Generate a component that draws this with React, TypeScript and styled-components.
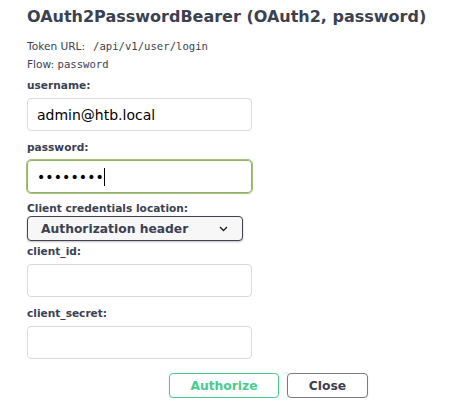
import React from "react";
import styled, { createGlobalStyle } from "styled-components";

const GlobalStyle = createGlobalStyle`
  html, body {
    margin: 0;
    padding: 0;
    background: #ffffff;
  }
  body {
    font-family: "DejaVu Sans", sans-serif;
    color: #3b4151;
  }
  * { box-sizing: border-box; }
`;

const Panel = styled.div`
  padding: 7px 0 0 27px;
  width: 474px;
`;

const Title = styled.h4`
  margin: 0 0 10px;
  font-size: 16px;
  line-height: 20px;
  font-weight: 700;
  color: #3b4151;
  white-space: nowrap;
`;

const Info = styled.p`
  margin: 0;
  font-size: 10.6px;
  line-height: 18px;
  color: #3b4151;
`;

const Code = styled.code<{ $gap?: number }>`
  font-family: "DejaVu Sans Mono", monospace;
  font-size: 10.6px;
  color: #3b4151;
  margin-left: ${(p) => p.$gap ?? 0}px;
`;

const Form = styled.div`
  display: flex;
  flex-direction: column;
  margin-top: 5px;
`;

const Label = styled.label`
  display: block;
  font-size: 10.6px;
  line-height: 14px;
  font-weight: 700;
  color: #3b4151;
`;

const TextInput = styled.input`
  display: block;
  width: 225px;
  height: 33px;
  margin: 6px 0 9px;
  padding: 0 9px;
  border: 1px solid #d9d9d9;
  border-radius: 4px;
  background: #fff;
  font-family: "DejaVu Sans", sans-serif;
  font-size: 14px;
  color: #000;
  outline: none;
`;

const FocusedField = styled.div`
  display: flex;
  align-items: center;
  width: 225px;
  height: 33px;
  margin: 6px 0 8px;
  padding: 0 9px;
  border: 1px solid #93b268;
  outline: 1px solid #a6bf80;
  border-radius: 4px;
  background: #fff;
  font-family: "DejaVu Sans", sans-serif;
  font-size: 14px;
  color: #000;
  letter-spacing: 0.1px;
`;

const Caret = styled.span`
  display: inline-block;
  width: 1px;
  height: 18px;
  background: #000;
`;

const Select = styled.div`
  display: flex;
  align-items: center;
  justify-content: space-between;
  width: 216px;
  height: 25px;
  margin: 1px 0 3px;
  padding: 0 14px 0 13px;
  border: 1px solid #41444e;
  border-radius: 4px;
  background: #f7f7f7;
  box-shadow: 0 1px 2px 0 rgba(0, 0, 0, 0.25);
  font-size: 12.3px;
  font-weight: 700;
  color: #3b4151;
`;

const Buttons = styled.div`
  display: flex;
  gap: 8px;
  padding-left: 142px;
  margin-top: 5px;
`;

const Button = styled.button<{ $variant: "authorize" | "close" }>`
  height: 25px;
  padding: 0 20px;
  border-radius: 4px;
  border: 1px solid ${(p) => (p.$variant === "authorize" ? "#49cc90" : "#7a7a7a")};
  color: ${(p) => (p.$variant === "authorize" ? "#49cc90" : "#3b4151")};
  background: transparent;
  box-shadow: 0 1px 2px rgba(0, 0, 0, 0.1);
  font-family: "DejaVu Sans", sans-serif;
  font-size: 12.3px;
  font-weight: 700;
  min-width: ${(p) => (p.$variant === "close" ? "81px" : "110px")};
  cursor: pointer;
`;

const Chevron = () => (
  <svg width="9" height="6" viewBox="0 0 9 6" aria-hidden="true">
    <polyline points="1,1 4.5,4.5 8,1" fill="none" stroke="#222" strokeWidth="1.4" />
  </svg>
);

export default function App() {
  return (
    <>
      <GlobalStyle />
      <Panel>
        <Title>OAuth2PasswordBearer (OAuth2, password)</Title>
        <Info>
          Token URL:<Code $gap={8}>/api/v1/user/login</Code>
        </Info>
        <Info>
          Flow: <Code>password</Code>
        </Info>
        <Form>
          <Label>username:</Label>
          <TextInput type="text" defaultValue="admin@htb.local" />
          <Label>password:</Label>
          <FocusedField role="textbox">
            ••••••••<Caret />
          </FocusedField>
          <Label>Client credentials location:</Label>
          <Select role="combobox">
            <span>Authorization header</span>
            <Chevron />
          </Select>
          <Label>client_id:</Label>
          <TextInput type="text" />
          <Label>client_secret:</Label>
          <TextInput type="password" />
        </Form>
        <Buttons>
          <Button $variant="authorize">Authorize</Button>
          <Button $variant="close">Close</Button>
        </Buttons>
      </Panel>
    </>
  );
}
